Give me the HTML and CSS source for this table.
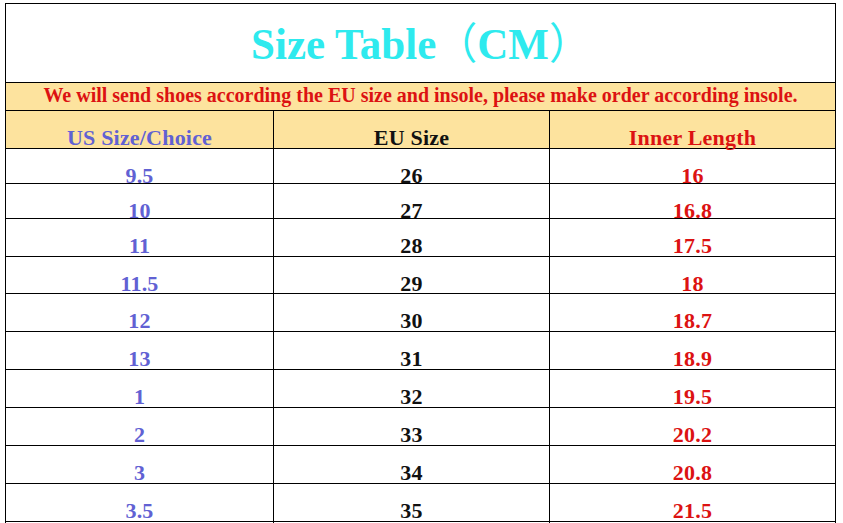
FILE: index.html
```html
<!DOCTYPE html>
<html>
<head>
<meta charset="utf-8">
<link rel="stylesheet" href="styles.css">
</head>
<body>
<div class="sheet">
  <div class="title-row"><h1 class="title">Size Table<span class="paren">（</span>CM<span class="paren">）</span></h1></div>
  <div class="note-row">We will send shoes according the EU size and insole, please make order according insole.</div>
  <div class="row head h38">
    <div class="cell us">US Size/Choice</div>
    <div class="cell eu">EU Size</div>
    <div class="cell len">Inner Length</div>
  </div>
  <div class="row h35"><div class="cell us">9.5</div><div class="cell eu">26</div><div class="cell len">16</div></div>
  <div class="row h35"><div class="cell us">10</div><div class="cell eu">27</div><div class="cell len">16.8</div></div>
  <div class="row h38"><div class="cell us">11</div><div class="cell eu">28</div><div class="cell len">17.5</div></div>
  <div class="row h37"><div class="cell us">11.5</div><div class="cell eu">29</div><div class="cell len">18</div></div>
  <div class="row h38"><div class="cell us">12</div><div class="cell eu">30</div><div class="cell len">18.7</div></div>
  <div class="row h38"><div class="cell us">13</div><div class="cell eu">31</div><div class="cell len">18.9</div></div>
  <div class="row h38"><div class="cell us">1</div><div class="cell eu">32</div><div class="cell len">19.5</div></div>
  <div class="row h38"><div class="cell us">2</div><div class="cell eu">33</div><div class="cell len">20.2</div></div>
  <div class="row h38"><div class="cell us">3</div><div class="cell eu">34</div><div class="cell len">20.8</div></div>
  <div class="row h38"><div class="cell us">3.5</div><div class="cell eu">35</div><div class="cell len">21.5</div></div>
  <div class="row h38 tail"><div class="cell us"></div><div class="cell eu"></div><div class="cell len"></div></div>
</div>
</body>
</html>
```
FILE: styles.css
```css
html, body {
  margin: 0;
  padding: 0;
  background: #ffffff;
  overflow: hidden;
}
body {
  padding: 3px 0 0 5px;
  font-family: "Liberation Serif", "Times New Roman", serif;
  font-weight: bold;
}
.sheet {
  width: 831px;
  box-sizing: border-box;
  border: 1px solid #000;
  border-bottom: none;
}
.title-row {
  height: 79px;
  box-sizing: border-box;
  border-bottom: 1px solid #000;
  display: flex;
  align-items: center;
  justify-content: center;
  padding-bottom: 3px;
}
.title {
  margin: 0;
  font-family: "Liberation Serif", "Times New Roman", serif;
  font-size: 43px;
  line-height: 43px;
  font-weight: bold;
  color: #2eeaee;
  transform: scaleY(1.05);
  text-spacing-trim: space-all;
  white-space: nowrap;
}
.paren {
  font-family: "Noto Sans CJK SC", sans-serif;
  font-weight: normal;
  font-size: 41px;
}
.note-row {
  height: 28px;
  box-sizing: border-box;
  border-bottom: 1px solid #000;
  background: #fde39e;
  color: #dc1212;
  font-size: 20px;
  line-height: 20px;
  text-align: center;
  padding-top: 2px;
  white-space: nowrap;
}
.row {
  display: grid;
  grid-template-columns: 267px 276px 286px;
  box-sizing: border-box;
  border-bottom: 1px solid #000;
}
.h35 { height: 35px; }
.h37 { height: 37px; }
.h38 { height: 38px; }
.head { background: #fde39e; }
.cell {
  text-align: center;
  font-size: 22px;
  line-height: 16px;
  padding-top: 19px;
  letter-spacing: 0.2px;
  white-space: nowrap;
}
.cell + .cell {
  border-left: 1px solid #000;
}
.us { color: #6161d3; }
.eu { color: #111; }
.len { color: #dc1212; }
```
